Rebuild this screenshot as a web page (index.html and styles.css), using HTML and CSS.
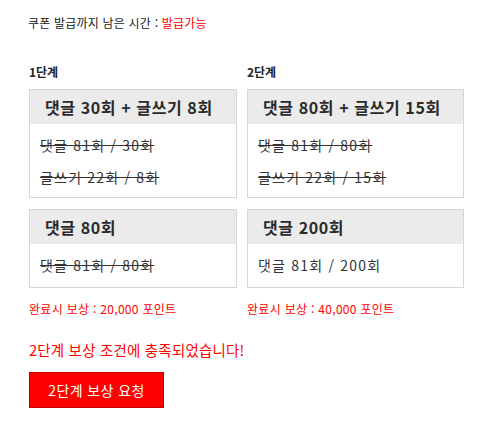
FILE: index.html
```html
<!DOCTYPE html>
<html lang="ko">
<head>
<meta charset="utf-8">
<link rel="stylesheet" href="styles.css">
</head>
<body>
<div class="page">
  <div class="notice">쿠폰 발급까지 남은 시간 : <span class="red">발급가능</span></div>
  <div class="stages">
    <div class="col col1">
      <div class="label">1단계</div>
      <div class="box">
        <div class="head">댓글 30회 + 글쓰기 8회</div>
        <div class="body"><div class="line done">댓글 81회 / 30회</div><div class="line done">글쓰기 22회 / 8회</div></div>
      </div>
      <div class="box second">
        <div class="head">댓글 80회</div>
        <div class="body one"><div class="line done">댓글 81회 / 80회</div></div>
      </div>
      <div class="reward">완료시 보상 : 20,000 포인트</div>
    </div>
    <div class="col col2">
      <div class="label">2단계</div>
      <div class="box">
        <div class="head">댓글 80회 + 글쓰기 15회</div>
        <div class="body"><div class="line done">댓글 81회 / 80회</div><div class="line done">글쓰기 22회 / 15회</div></div>
      </div>
      <div class="box second">
        <div class="head">댓글 200회</div>
        <div class="body one"><div class="line">댓글 81회 / 200회</div></div>
      </div>
      <div class="reward">완료시 보상 : 40,000 포인트</div>
    </div>
  </div>
  <div class="message">2단계 보상 조건에 충족되었습니다!</div>
  <button class="request">2단계 보상 요청</button>
</div>
</body>
</html>
```
FILE: styles.css
```css
html, body { margin: 0; padding: 0; background: #fff; }
body { font-family: "Noto Sans CJK KR", "Noto Sans", sans-serif; color: #222; }
.page { padding: 14px 0 0 29px; }
.notice { font-size: 12px; line-height: 18px; margin-left: -1px; letter-spacing: 0.2px; }
.red { color: #ff0000; }
.stages { display: grid; grid-template-columns: 208px 217px; column-gap: 10px; margin-top: 31px; }
.col { display: flex; flex-direction: column; }
.label { font-size: 12px; font-weight: bold; line-height: 18px; color: #222; margin-bottom: 8px; }
.box { border: 1px solid #d6d6d6; }
.box.second { margin-top: 11px; }
.head { background: #ebebeb; height: 34px; line-height: 34px; padding-left: 15px; font-size: 16px; font-weight: bold; color: #2a2a2a; letter-spacing: 0.6px; }
.body { padding: 5px 10px 4px; }
.body.one { padding: 5px 10px 6px; }
.line { font-size: 14px; line-height: 32px; color: #333; letter-spacing: 1.2px; }
.line.done { text-decoration: line-through; }
.reward { color: #ff0000; font-size: 12px; line-height: 18px; margin-top: 12px; letter-spacing: 0.3px; }
.message { color: #ff0000; font-size: 14.5px; line-height: 20px; margin-top: 22px; letter-spacing: 0.2px; }
.request { margin-top: 12px; width: 135px; height: 36px; background: #ff0000; border: 1px solid #c00000; color: #fff; font-family: inherit; font-size: 14px; letter-spacing: 0.4px; padding: 0; display: block; cursor: pointer; }
```
